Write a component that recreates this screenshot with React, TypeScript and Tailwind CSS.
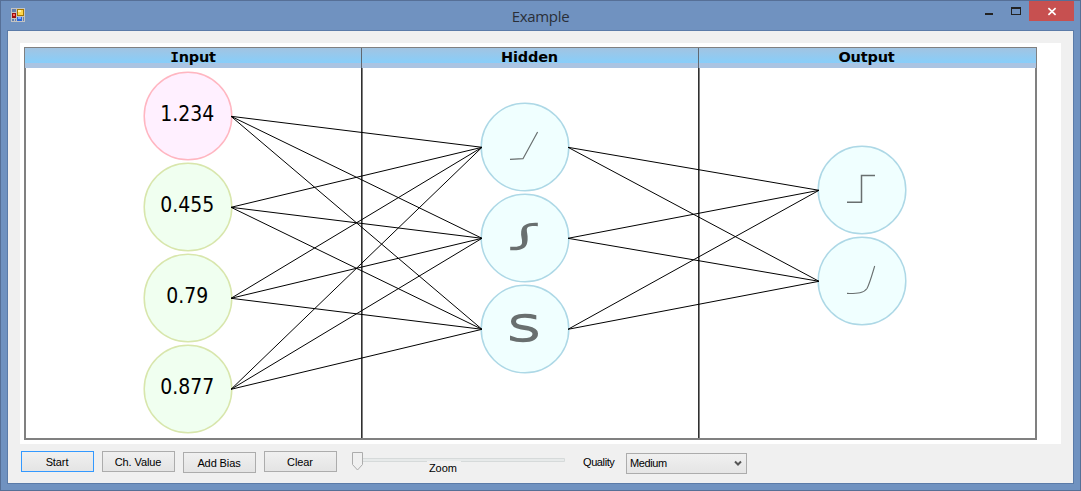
type Point = [number, number];

const inputs = [
  { value: "1.234", y: 116, width: 54, bias: true },
  { value: "0.455", y: 207, width: 54, bias: false },
  { value: "0.79", y: 298, width: 42, bias: false },
  { value: "0.877", y: 389, width: 54, bias: false },
];
const hidden: Point[] = [[525, 147], [525, 238], [525, 329]];
const outputs: Point[] = [[862, 190], [862, 281]];

function Network() {
  return (
    <svg className="absolute left-0 top-0" width="1041" height="401" viewBox="20 43 1041 401">
      {inputs.map((n) => (
        <circle key={n.y} cx="188" cy={n.y} r="43.8" fill={n.bias ? "#fff0ff" : "#f0fff0"} stroke={n.bias ? "#ffb6c1" : "#d8e6ac"} strokeWidth="1.5" />
      ))}
      {[...hidden, ...outputs].map(([x, y]) => (
        <circle key={`${x}-${y}`} cx={x} cy={y} r="43.8" fill="#f0ffff" stroke="#add8e6" strokeWidth="1.5" />
      ))}
      <g stroke="#000" strokeWidth="1">
        {inputs.flatMap((n) => hidden.map(([x, y]) => (
          <line key={`${n.y}-${y}`} x1="231" y1={n.y + 0.3} x2={x - 43} y2={y + 0.3} />
        )))}
        {hidden.flatMap(([x, y]) => outputs.map(([ox, oy]) => (
          <line key={`${y}-${oy}`} x1={x + 43} y1={y + 0.3} x2={ox - 43} y2={oy + 0.3} />
        )))}
      </g>
      {inputs.map((n) => (
        <text key={n.y} x="187.3" y={n.y + 5.3} textAnchor="middle" fontFamily="'DejaVu Sans', sans-serif" fontSize="22" textLength={n.width} lengthAdjust="spacingAndGlyphs">
          {n.value}
        </text>
      ))}
      <g fill="none" stroke="#696f6f">
        <path d="M510 159.4L523 158.7L537.6 132" strokeWidth="1.2" />
        <path d="M847 202.3H861.5V175.6H875" strokeWidth="1.5" />
        <path d="M847 293.4C858 293.6 864 293 867 288.5C869.5 284 872 275 874.7 266" strokeWidth="1.1" />
      </g>
      <g fill="#696f6f">
        <path d="M537.8 222.8V226.3C531 225.5 527 226.5 526.8 229.5C526.6 232 528 235 527.6 240C527 247 524 250.8 510.2 250.3V246.8C518 247.2 521.5 246 522 243C522.6 239 520.5 236 521.2 231.5C522 225 527 222.3 537.8 222.8Z" />
        <path d="M536.3 315.2V319.6Q530 317.7 525 317.7Q516 317.7 516 321.4Q516 324 522 325L528 326Q538 328 538 333.5Q538 342.2 523 342.2Q516 342.2 510 340.3V335.4Q516 338.2 522.5 338.2Q532.5 338.2 532.5 334Q532.5 331.3 526 330.3L521 329.4Q511 327.6 511 321.8Q511 313.8 525 313.8Q531 313.8 536.3 315.2Z" />
      </g>
    </svg>
  );
}

function AppIcon() {
  return (
    <svg width="14" height="14" viewBox="0 0 14 14" shapeRendering="crispEdges">
      <path fill="#c3c3c3" d="M0 0h14v14H0z" />
      <path fill="#6580ac" d="M1 1h4v3H1zM1 11h2v2H1zM4 11h1v2H4zM12 9h1v4h-1z" />
      <path fill="#9b1010" d="M1 5h4v5H1z" />
      <path fill="#ff6b60" d="M2 6h2v2H2z" />
      <path fill="#a57800" d="M6 1h7v7H6z" />
      <path fill="#ffd74d" d="M7 2h5v5H7z" />
      <path fill="#fff0a8" d="M7 2h3v2H7z" />
      <path fill="#2965d8" d="M6 9h5v4H6z" />
      <path fill="#7eaaff" d="M7 9h3v2H7z" />
    </svg>
  );
}

function Button({ label, focused = false, low = false }: { label: string; focused?: boolean; low?: boolean }) {
  return (
    <button className={`h-[21px] w-[73px] shrink-0 border bg-linear-to-b from-[#f0f0f0] to-[#e4e4e4] pr-px text-center leading-[20px] ${focused ? "border-[#3399ff]" : "border-[#acacac]"} ${low ? "mt-px" : ""}`}>
      {label}
    </button>
  );
}

export default function App() {
  return (
    <div className="flex h-[491px] w-[1081px] flex-col overflow-hidden border border-[#566f96] bg-[#7092c0]">
      <header className="relative flex h-[29px] shrink-0 items-start justify-between pl-[10px] pr-[6px]">
        <div className="mt-[7px]"><AppIcon /></div>
        <h1 className="absolute inset-x-0 top-[5px] text-center font-['Open_Sans','Noto_Sans',sans-serif] text-[15px] leading-[20px] tracking-[-0.3px] text-[#2a2f38]">Example</h1>
        <svg width="90" height="20" viewBox="984 1 90 20" shapeRendering="crispEdges">
          <path fill="#222" d="M985 13h8v2h-8z" />
          <path fill="#222" fillRule="evenodd" d="M1011 7h10v8h-10zM1012 9v5h8V9z" />
          <path fill="#c75050" d="M1029 1h45v20h-45z" />
          <path stroke="#fff" strokeWidth="1.7" shapeRendering="geometricPrecision" d="M1048.4 8.2L1055.6 14.8M1055.6 8.2L1048.4 14.8" />
        </svg>
      </header>

      <main className="mx-[6px] mb-[6px] flex min-h-0 flex-1 flex-col border border-[#5b7ba8] bg-[#f0f0f0] px-[12px] pt-[12px]">
        <section className="relative h-[401px] w-[1041px] shrink-0 bg-white pl-[4px] pt-[4px]">
          <div className="flex h-[393px] w-[1013px] flex-col border-2 border-t border-[#808080]">
            <div className="-mx-px grid h-[20px] shrink-0 grid-cols-[336px_337px_338px] bg-[linear-gradient(#a2c4e2,#87cefa_15px,#aac4e2_15px)] text-center font-['DejaVu_Sans',sans-serif] text-[14.5px] font-bold leading-[18px] tracking-[-0.2px]">
              <div><span className="font-['DejaVu_Sans_Mono',monospace]">I</span>nput</div>
              <div className="border-l border-[#606870] pr-px">Hidden</div>
              <div className="border-l border-[#606870] pr-[2px]">Output</div>
            </div>
            <div className="-mx-px grid flex-1 grid-cols-[336px_337px_338px]">
              <div />
              <div className="border-l border-[#303030] shadow-[inset_1px_0_#808080]" />
              <div className="border-l border-[#303030] shadow-[inset_1px_0_#808080]" />
            </div>
          </div>
          <Network />
        </section>

        <footer className="flex h-[39px] items-start pl-px pt-[7px] font-['Liberation_Sans',sans-serif] text-[11px] tracking-[-0.1px] text-black">
          <div className="flex gap-[8px]">
            <Button label="Start" focused />
            <Button label="Ch. Value" />
            <Button label="Add Bias" low />
            <Button label="Clear" />
          </div>
          <div className="relative ml-[14px] h-[28px] w-[216px]">
            <svg width="216" height="28" viewBox="351 451 216 28">
              <path d="M358.5 458.5H564.5V461.5H358.5Z" fill="#e7eaea" stroke="#d6dada" />
              <path d="M352.5 452.5H362.5V464.5L357.5 470L352.5 464.5Z" fill="#f0f0f0" stroke="#acacac" />
            </svg>
            <span className="absolute left-[76px] top-[10px] w-[34px] bg-[#f0f0f0] pl-[2px] leading-[14px]">Zoom</span>
          </div>
          <label className="ml-[16px] mt-[4px] w-[43px] leading-[14px] tracking-[-0.4px]">Quality</label>
          <div className="mt-[2px] flex h-[21px] w-[121px] items-center justify-between border border-[#acacac] bg-linear-to-b from-[#f0f0f0] to-[#e5e5e5] pl-[3px] pr-[4px]">
            <span className="tracking-[-0.4px]">Medium</span>
            <svg width="8" height="7" viewBox="0 0 8 7"><path d="M1 1.5L4 4.5L7 1.5" fill="none" stroke="#555" strokeWidth="2" /></svg>
          </div>
        </footer>
      </main>
    </div>
  );
}
